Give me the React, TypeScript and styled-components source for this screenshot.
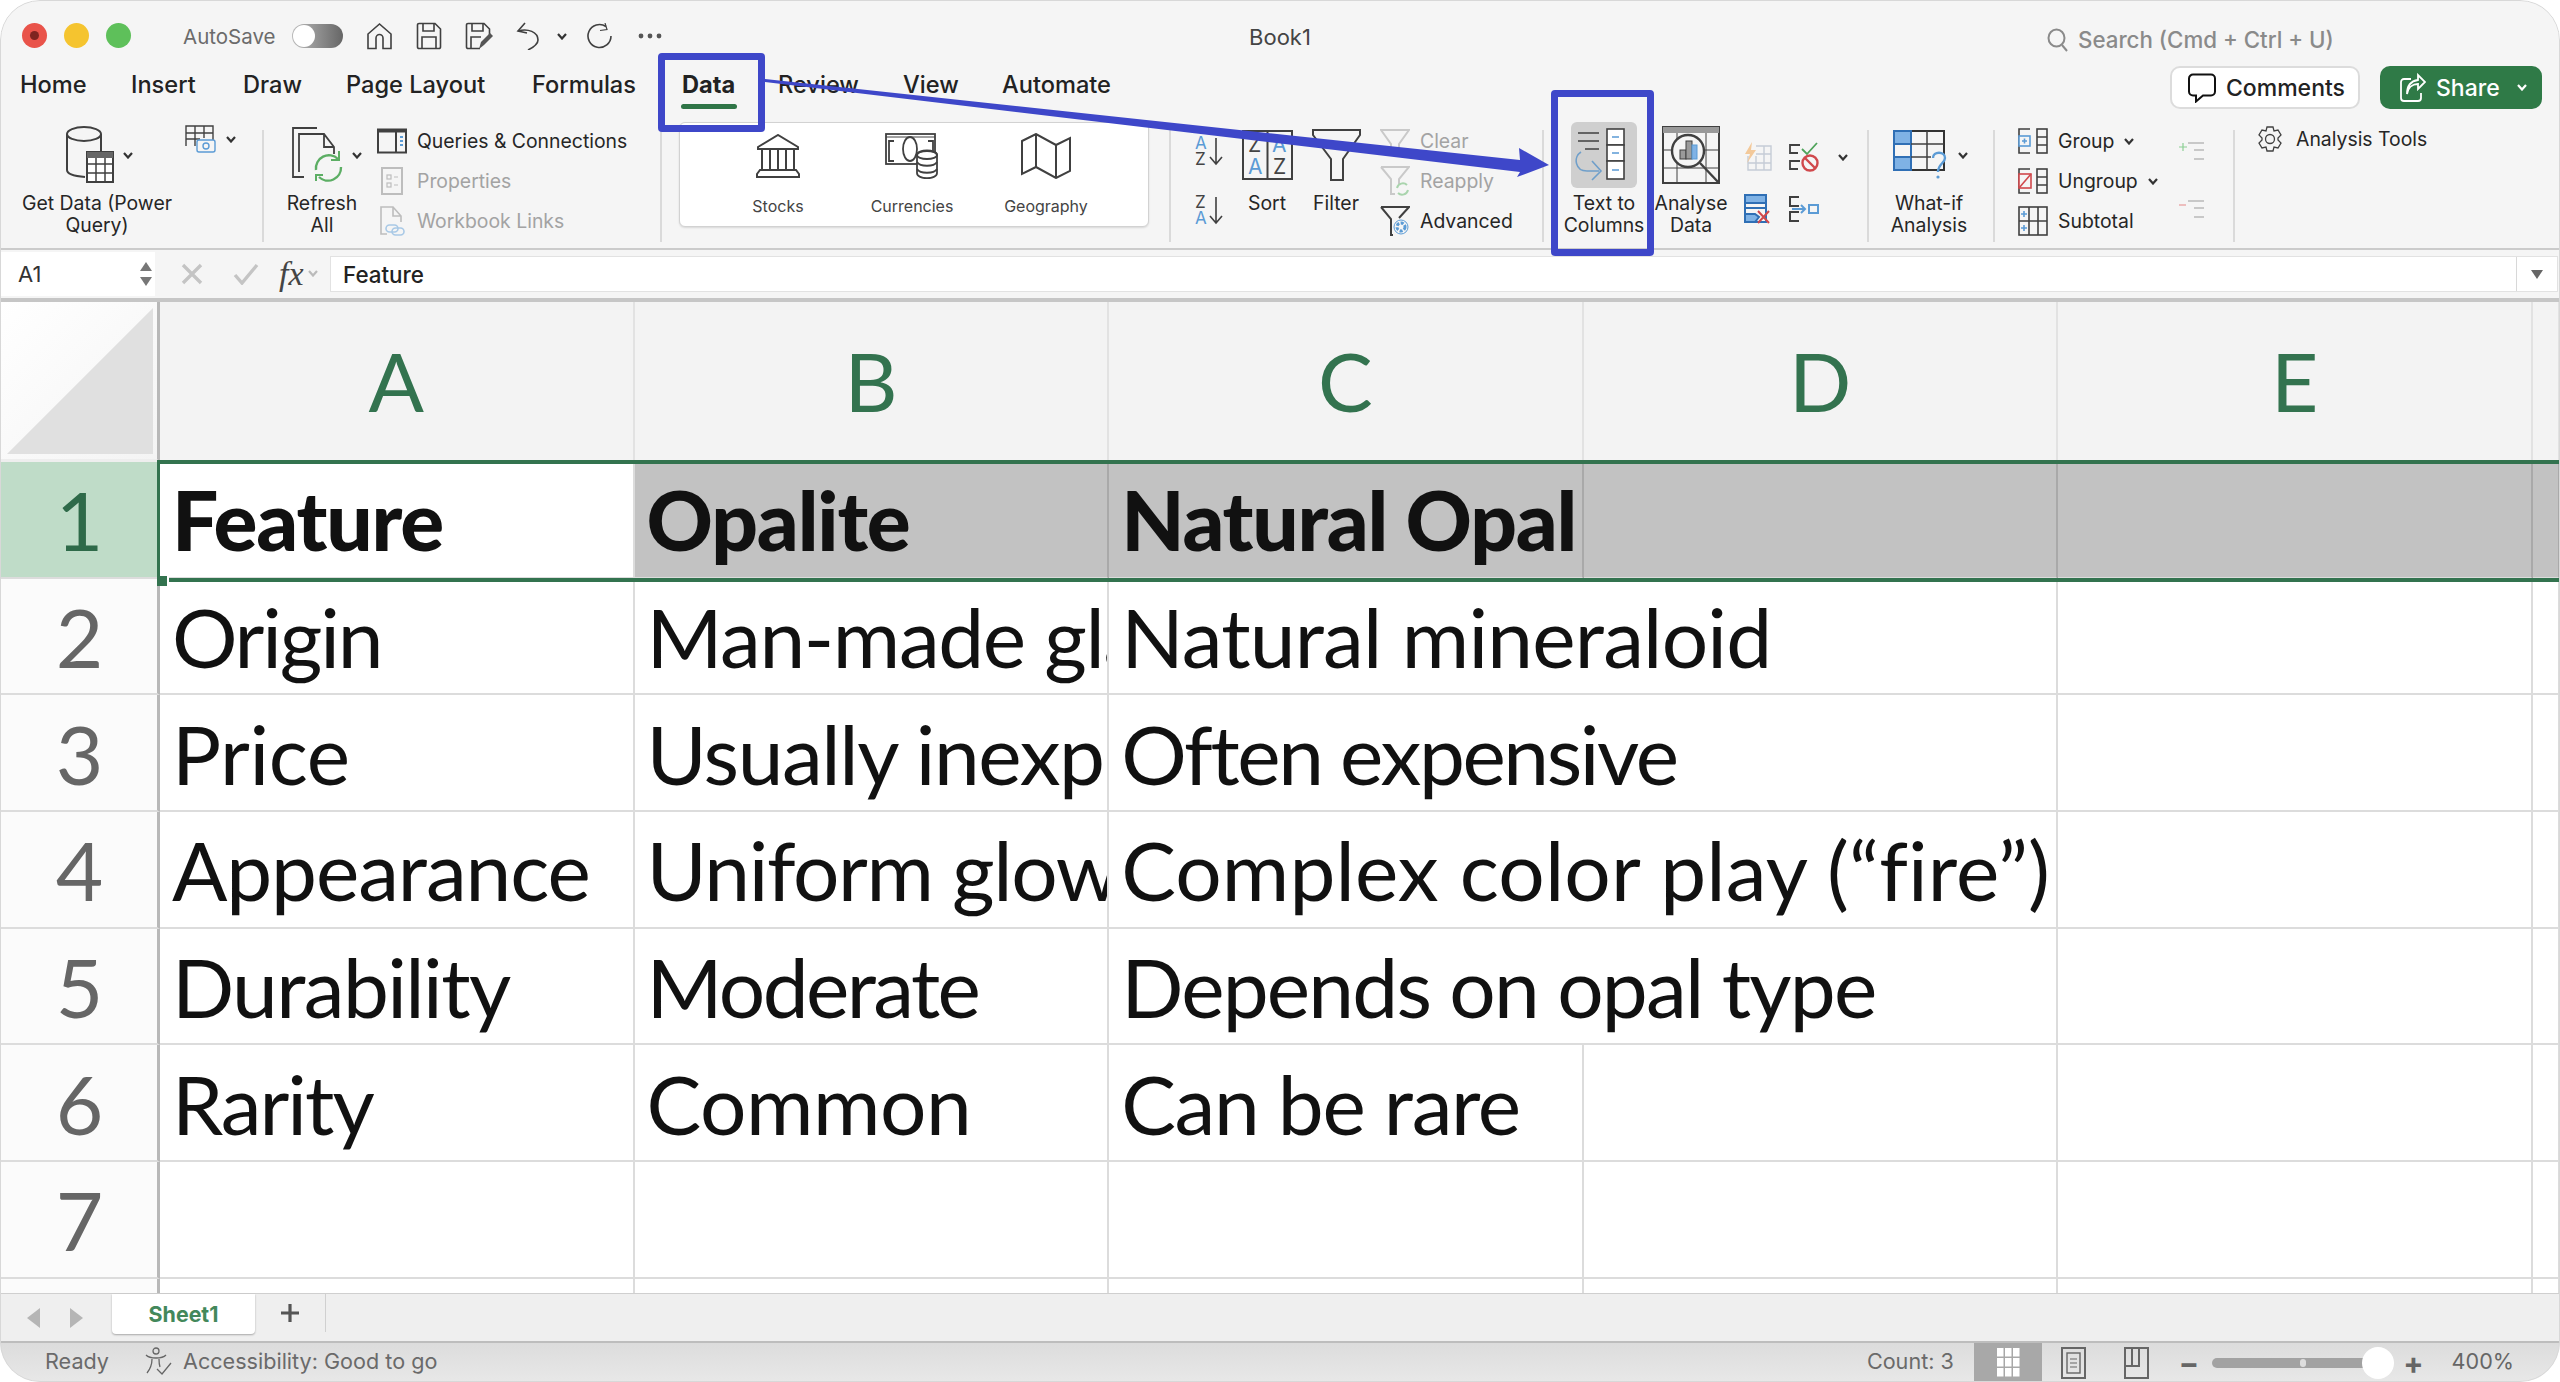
import React from 'react';
import styled, { createGlobalStyle } from 'styled-components';

const GlobalStyle = createGlobalStyle`
  html, body { margin: 0; padding: 0; background: #fff; }
  body { font-family: Inter, "Liberation Sans", sans-serif; overflow: hidden; }
`;

const Win = styled.div`
  position: relative;
  width: 2560px;
  height: 1382px;
  overflow: hidden;
  border-radius: 40px;
  background: #f5f5f5;
  display: flex;
  flex-direction: column;
  color: #222;
  &::after {
    content: '';
    position: absolute;
    inset: 0;
    border-radius: 40px;
    border: 1px solid #d8d8d8;
    pointer-events: none;
  }
`;

const Ico = styled.svg.attrs<React.SVGProps<SVGSVGElement>>(p => ({
  fill: p.fill ?? 'none',
  stroke: p.stroke ?? 'currentColor',
  strokeWidth: p.strokeWidth ?? 2,
}))`
  display: block;
  flex: none;
  color: #404040;
`;

/* title bar */
const TitleBar = styled.div`
  height: 66px;
  flex: none;
  display: flex;
  align-items: flex-start;
  padding: 6px 0 0 22px;
  box-sizing: border-box;
`;
const TrafficLights = styled.div`
  display: flex;
  gap: 17px;
  margin-top: 17px;
`;
const Light = styled.span<{ $c: string }>`
  width: 25px;
  height: 25px;
  border-radius: 50%;
  background: ${p => p.$c};
  display: flex;
  align-items: center;
  justify-content: center;
  &:first-child::after {
    content: '';
    width: 9px;
    height: 9px;
    border-radius: 50%;
    background: #7d2420;
  }
`;
const QuickBar = styled.div`
  display: flex;
  align-items: center;
  height: 60px;
  margin-left: 52px;
  font-size: 20.5px;
  color: #6b6b6b;
`;
const AutoSave = styled.span`
  width: 109px;
`;
const Toggle = styled.span`
  width: 51px;
  height: 24px;
  border-radius: 12px;
  background: linear-gradient(90deg, #bbb, #666);
  display: flex;
  margin-right: 23px;
  &::before {
    content: '';
    width: 22px;
    height: 22px;
    margin: 1px;
    border-radius: 50%;
    background: #fff;
  }
`;
const QuickBtn = styled.span<{ $gap?: number }>`
  display: flex;
  margin-right: ${p => p.$gap ?? 23}px;
`;
const WinTitle = styled.div`
  position: absolute;
  left: 1180px;
  width: 200px;
  top: 24px;
  text-align: center;
  font-size: 22px;
  color: #444;
`;
const SearchBox = styled.div`
  position: absolute;
  left: 2047px;
  top: 26px;
  display: flex;
  align-items: center;
  gap: 10px;
  font-size: 22.3px;
  font-weight: 500;
  color: #8a8a8a;
`;

/* tabs */
const TabRow = styled.div`
  height: 54px;
  flex: none;
  display: flex;
  align-items: flex-start;
  padding-left: 20px;
  box-sizing: border-box;
`;
const Tab = styled.span<{ $w: number; $active?: boolean }>`
  width: ${p => p.$w}px;
  height: 38px;
  line-height: 38px;
  font-size: 23.6px;
  font-weight: ${p => (p.$active ? 700 : 500)};
  color: #222;
  white-space: nowrap;
  position: relative;
  ${p =>
    p.$active &&
    `&::after {
      content: '';
      position: absolute;
      left: -1px;
      top: 38px;
      width: 56px;
      height: 5px;
      border-radius: 3px;
      background: #2f7547;
    }`}
`;
const TabRight = styled.div`
  margin-left: auto;
  display: flex;
  gap: 20px;
  padding-right: 18px;
`;
const CommentsBtn = styled.div`
  width: 190px;
  height: 43px;
  box-sizing: border-box;
  background: #fff;
  border: 2px solid #dcdcdc;
  border-radius: 10px;
  display: flex;
  align-items: center;
  padding-left: 15px;
  gap: 9px;
  font-size: 23px;
  font-weight: 500;
`;
const ShareBtn = styled.div`
  width: 162px;
  height: 43px;
  box-sizing: border-box;
  background: #2f7a47;
  border-radius: 10px;
  color: #fff;
  display: flex;
  align-items: center;
  padding-left: 19px;
  gap: 10px;
  font-size: 23px;
  font-weight: 500;
`;
const ShareChevron = styled.span`
  margin-left: 5px;
  display: flex;
`;

/* ribbon */
const Ribbon = styled.div`
  height: 130px;
  flex: none;
  box-sizing: border-box;
  border-bottom: 2px solid #cbcbcb;
  display: flex;
  align-items: flex-start;
`;
const Group = styled.div<{ $w: number; $pad: number }>`
  width: ${p => p.$w}px;
  height: 128px;
  flex: none;
  box-sizing: border-box;
  padding-left: ${p => p.$pad}px;
  display: flex;
  align-items: flex-start;
`;
const Sep = styled.div`
  width: 2px;
  height: 112px;
  margin-top: 10px;
  flex: none;
  background: #dadada;
`;
const Large = styled.div<{ $w: number; $ml?: number }>`
  width: ${p => p.$w}px;
  margin-left: ${p => p.$ml ?? 0}px;
  flex: none;
  display: flex;
  flex-direction: column;
  align-items: center;
`;
const LargeIcon = styled.div<{ $indent?: number; $lit?: boolean }>`
  height: 66px;
  margin: 2px 0 4px;
  align-self: ${p => (p.$lit ? 'center' : 'stretch')};
  width: ${p => (p.$lit ? '66px' : 'auto')};
  padding-left: ${p => p.$indent ?? 0}px;
  display: flex;
  align-items: center;
  gap: 8px;
  justify-content: ${p => (p.$indent === undefined ? 'center' : 'flex-start')};
  ${p => p.$lit && 'background: #cfcfcf; border-radius: 6px;'}
`;
const Label = styled.div`
  font-size: 19.4px;
  line-height: 22px;
  text-align: center;
  color: #262626;
  white-space: nowrap;
`;
const Stack = styled.div<{ $ml?: number; $w?: number }>`
  display: flex;
  flex-direction: column;
  margin-left: ${p => p.$ml ?? 0}px;
  ${p => p.$w && `width: ${p.$w}px;`}
  flex: none;
  padding-top: 1px;
`;
const RowTool = styled.div<{ $muted?: boolean }>`
  height: 40px;
  display: flex;
  align-items: center;
  font-size: 19.4px;
  white-space: nowrap;
  color: ${p => (p.$muted ? '#a3a3a3' : '#262626')};
`;
const RowIcon = styled.span`
  width: 30px;
  margin-right: 10px;
  display: flex;
  justify-content: center;
`;
const TextMenu = styled.span`
  margin-right: 10px;
`;
const Mini = styled.div<{ $ml: number; $mt: number }>`
  margin-left: ${p => p.$ml}px;
  margin-top: ${p => p.$mt}px;
  display: flex;
  align-items: center;
  gap: 10px;
  flex: none;
`;
const MiniGrid = styled.div`
  display: grid;
  grid-template-columns: 30px 30px 14px;
  column-gap: 17px;
  row-gap: 22px;
  margin: 22px 0 0 16px;
  align-items: center;
  justify-items: center;
`;
const OutlineCol = styled.div`
  margin: 21px 0 0 12px;
  display: flex;
  flex-direction: column;
  gap: 38px;
`;
const TypesPanel = styled.div`
  width: 470px;
  height: 105px;
  margin-top: 2px;
  box-sizing: border-box;
  background: #fff;
  border: 1px solid #d2d2d2;
  border-radius: 6px;
  box-shadow: 0 1px 2px rgba(0, 0, 0, 0.12);
  padding: 11px 0 0 31px;
  display: flex;
`;
const TypeCell = styled.div`
  width: 134px;
  display: flex;
  flex-direction: column;
  align-items: center;
  gap: 18px;
  font-size: 16px;
  line-height: 20px;
  color: #444;
`;
const TypeIcon = styled.div`
  height: 44px;
  display: flex;
  align-items: center;
`;
const SortCol = styled.div`
  width: 30px;
  display: flex;
  flex-direction: column;
  gap: 29px;
  margin-top: 16px;
  flex: none;
`;
const AnalysisTools = styled.div`
  display: flex;
  align-items: center;
  gap: 13px;
  margin-top: 6px;
  font-size: 19.4px;
  color: #262626;
`;

/* formula bar */
const FormulaBar = styled.div`
  height: 52px;
  flex: none;
  box-sizing: border-box;
  display: flex;
  align-items: flex-start;
  border-bottom: 4px solid #c6c6c6;
`;
const NameBox = styled.div`
  width: 155px;
  height: 44px;
  margin-top: 2px;
  box-sizing: border-box;
  background: #fff;
  padding: 0 3px 0 18px;
  display: flex;
  align-items: center;
  justify-content: space-between;
  font-size: 22px;
  color: #333;
`;
const Spinner = styled.div`
  display: flex;
  flex-direction: column;
  gap: 6px;
`;
const FxTools = styled.div`
  width: 175px;
  height: 47px;
  flex: none;
  box-sizing: border-box;
  display: flex;
  align-items: center;
  padding-left: 26px;
`;
const FxMark = styled.span`
  font-family: 'Liberation Serif', serif;
  font-style: italic;
  font-size: 34px;
  color: #444;
  margin: 0 4px 0 20px;
`;
const FormulaInput = styled.div`
  flex: 1;
  height: 36px;
  margin: 6px 2px 0 0;
  box-sizing: border-box;
  background: #fff;
  border: 1px solid #e2e2e2;
  display: flex;
  align-items: center;
  padding-left: 12px;
  font-size: 22.4px;
  font-weight: 500;
  color: #222;
`;
const FormulaDrop = styled.span`
  margin-left: auto;
  width: 40px;
  height: 100%;
  border-left: 1px solid #d8d8d8;
  display: flex;
  align-items: center;
  justify-content: center;
`;

/* sheet */
const SheetArea = styled.div`
  position: relative;
  height: 991px;
  flex: none;
  overflow: hidden;
  background: #fff;
`;
const Sheet = styled.div`
  display: grid;
  grid-template-columns: 160px repeat(5, 474.6px) 1fr;
  grid-template-rows: 160px;
  grid-auto-rows: 116.7px;
  font-family: Lato, 'Liberation Sans', sans-serif;
  font-size: 82px;
  font-variant-ligatures: none;
  color: #111;
`;
const Corner = styled.div`
  background: linear-gradient(135deg, #fff, #f4f4f4);
  border-right: 3px solid #b8b8b8;
  border-bottom: 3px solid #eee;
  box-sizing: border-box;
  display: flex;
  align-items: flex-end;
  justify-content: flex-end;
  padding: 0 4px 5px 0;
`;
const ColHead = styled.div`
  background: #f3f3f3;
  border-right: 2px solid #e2e2e2;
  box-sizing: border-box;
  display: flex;
  align-items: center;
  justify-content: center;
  color: #33734f;
  padding-bottom: 5px;
`;
const RowHead = styled.div<{ $on?: boolean }>`
  background: ${p => (p.$on ? '#bfdcc8' : '#fbfbfb')};
  color: ${p => (p.$on ? '#2e6a49' : '#666')};
  border-right: 3px solid #b8b8b8;
  border-bottom: 2px solid #dcdcdc;
  box-sizing: border-box;
  display: flex;
  align-items: center;
  justify-content: center;
  padding-left: 2px;
`;
const Cell = styled.div<{ $span?: number; $gray?: boolean; $bold?: boolean; $track?: number }>`
  grid-column: span ${p => p.$span ?? 1};
  box-sizing: border-box;
  border-right: 2px solid ${p => (p.$gray ? '#a9a9a9' : '#dcdcdc')};
  border-bottom: 2px solid #dcdcdc;
  background: ${p => (p.$gray ? '#c2c2c2' : '#fff')};
  padding-left: 12px;
  display: flex;
  align-items: center;
  white-space: nowrap;
  overflow: hidden;
  letter-spacing: ${p => p.$track ?? -1.2}px;
  font-weight: ${p => (p.$bold ? 900 : 400)};
`;
const Selection = styled.div`
  position: absolute;
  left: 157px;
  top: 158px;
  right: 0;
  height: 122px;
  box-sizing: border-box;
  border: solid #33734f;
  border-width: 4px 0 4px 3px;
  pointer-events: none;
  &::after {
    content: '';
    position: absolute;
    left: -3px;
    bottom: -8px;
    width: 10px;
    height: 10px;
    background: #33734f;
    border-right: 2px solid #fff;
  }
`;

/* bottom */
const TabsBar = styled.div`
  height: 48px;
  flex: none;
  box-sizing: border-box;
  background: #efefef;
  border-top: 1px solid #cfcfcf;
  display: flex;
  align-items: flex-start;
  padding-left: 27px;
`;
const NavArrow = styled.span<{ $gap: number }>`
  margin: 14px ${p => p.$gap}px 0 0;
  display: flex;
`;
const SheetTab = styled.div`
  width: 143px;
  height: 40px;
  background: #fff;
  border-radius: 0 0 4px 4px;
  box-shadow: 0 1px 2px rgba(0, 0, 0, 0.3);
  display: flex;
  align-items: center;
  justify-content: center;
  font-size: 21.4px;
  font-weight: 700;
  color: #43885b;
`;
const AddSheet = styled.div`
  width: 70px;
  height: 38px;
  border-right: 1px solid #d0d0d0;
  display: flex;
  align-items: center;
  justify-content: center;
  color: #555;
`;
const StatusBar = styled.div`
  height: 41px;
  flex: none;
  box-sizing: border-box;
  border-top: 2px solid #bdbdbd;
  background: linear-gradient(180deg, #dcdcdc, #e8e8e8);
  display: flex;
  align-items: center;
  padding-left: 45px;
  font-size: 21.6px;
  color: #6a6a6a;
`;
const Ready = styled.span`
  width: 99px;
  margin-bottom: 4px;
`;
const Access = styled.span`
  display: flex;
  align-items: center;
  gap: 10px;
  margin-bottom: 4px;
`;
const StatusRight = styled.div`
  margin-left: auto;
  display: flex;
  align-items: center;
  height: 100%;
  padding-right: 46px;
`;
const Count = styled.span`
  margin: 0 20px 4px 0;
`;
const ViewBtn = styled.span<{ $on?: boolean; $w: number }>`
  width: ${p => p.$w}px;
  height: 100%;
  display: flex;
  align-items: center;
  justify-content: center;
  ${p => p.$on && 'background: #a8a8a8;'}
`;
const ZoomTrack = styled.span`
  width: 166px;
  height: 10px;
  margin: 0 25px 0 13px;
  background: #a2a2a2;
  border-radius: 5px;
  position: relative;
  &::before {
    content: '';
    position: absolute;
    left: 88px;
    top: 1px;
    width: 6px;
    height: 8px;
    border-radius: 3px;
    background: #ddd;
  }
  &::after {
    content: '';
    position: absolute;
    right: -16px;
    top: -11px;
    width: 32px;
    height: 32px;
    border-radius: 50%;
    background: #fff;
  }
`;
const ZoomPct = styled.span`
  margin: 0 0 4px 28px;
  color: #666;
`;
const ZoomSign = styled.span<{ $ml?: number }>`
  margin-left: ${p => p.$ml ?? 0}px;
  font-size: 30px;
  font-weight: 700;
  line-height: 30px;
  color: #666;
`;

/* annotations */
const Callout = styled.div<{ $x: number; $y: number; $w: number; $h: number }>`
  position: absolute;
  left: ${p => p.$x}px;
  top: ${p => p.$y}px;
  width: ${p => p.$w}px;
  height: ${p => p.$h}px;
  box-sizing: border-box;
  border: 7px solid #3e47c9;
  border-radius: 4px;
  pointer-events: none;
`;
const ArrowOverlay = styled.svg`
  position: absolute;
  left: 760px;
  top: 70px;
  pointer-events: none;
`;

const blue = '#5b9bd5';
const paleBlue = '#7fb2e5';

const Chevron = ({ w = 10, c = '#333' }: { w?: number; c?: string }) => (
  <Ico width={w} height={7} viewBox="0 0 10 7" style={{ color: c }} strokeWidth={2.2}>
    <path d="M1 1l4 4.5L9 1" />
  </Ico>
);

const HomeIcon = () => (
  <Ico width={27} height={28} viewBox="0 0 27 28" strokeWidth={1.6}>
    <path d="M2 12L13.5 2 25 12v14.5h-8V16a3.5 3.5 0 0 0-7 0v10.5H2z" />
  </Ico>
);
const SaveIcon = () => (
  <Ico width={26} height={28} viewBox="0 0 26 28" strokeWidth={1.6}>
    <path d="M3 1.5h16L24.5 7v18a1.5 1.5 0 0 1-1.5 1.5H3A1.5 1.5 0 0 1 1.5 25V3A1.5 1.5 0 0 1 3 1.5z" />
    <path d="M7 1.5V9h11V1.5M6 26.5V15h14v11.5" />
  </Ico>
);
const SaveAsIcon = () => (
  <Ico width={28} height={28} viewBox="0 0 28 28" strokeWidth={1.6}>
    <path d="M15 26.5H3A1.5 1.5 0 0 1 1.5 25V3A1.5 1.5 0 0 1 3 1.5h16L24.5 7v7" />
    <path d="M7 1.5V9h11V1.5M6 26V15h10" />
    <path d="M14 27l2-7 9-9 3 3-9 9z" fill="#555" stroke="none" />
  </Ico>
);
const UndoIcon = () => (
  <Ico width={24} height={28} viewBox="0 0 24 28" strokeWidth={1.6}>
    <path d="M9 1L2 9l9 2" />
    <path d="M2 9c10-3 20 1 20 9 0 5-6 8-10 10" />
  </Ico>
);
const RedoIcon = () => (
  <Ico width={26} height={26} viewBox="0 0 26 26" strokeWidth={1.6}>
    <path d="M19 3.5A11.5 11.5 0 1 0 24 13" />
    <path d="M18 0l2 6.5-7 1" strokeWidth={1.2} />
  </Ico>
);
const DotsIcon = () => (
  <Ico width={24} height={6} viewBox="0 0 24 6" stroke="none" style={{ fill: '#555' }}>
    <circle cx="3" cy="3" r="2.4" />
    <circle cx="12" cy="3" r="2.4" />
    <circle cx="21" cy="3" r="2.4" />
  </Ico>
);
const SearchIcon = () => (
  <Ico width={21} height={24} viewBox="0 0 21 24" style={{ color: '#8a8a8a' }}>
    <ellipse cx="9.5" cy="10" rx="8" ry="8.5" />
    <path d="M15 17l5 6" />
  </Ico>
);
const CommentIcon = () => (
  <Ico width={30} height={30} viewBox="0 0 30 30" style={{ color: '#111' }}>
    <path d="M6 1.5h18a4 4 0 0 1 4 4v13a4 4 0 0 1-4 4h-8l-7 6v-6H6a4 4 0 0 1-4-4v-13a4 4 0 0 1 4-4z" />
  </Ico>
);
const ShareIcon = () => (
  <Ico width={27} height={30} viewBox="0 0 27 30" style={{ color: '#fff' }} strokeWidth={1.8}>
    <path d="M12 6H5a3 3 0 0 0-3 3v16a3 3 0 0 0 3 3h14a3 3 0 0 0 3-3v-5" />
    <path d="M8 21c1-7 6-10 11-10V16l7-7-7-7v5C12 8 8 12 8 21z" />
  </Ico>
);

const GetDataIcon = () => (
  <Ico width={50} height={58} viewBox="0 0 50 58">
    <ellipse cx="19" cy="8" rx="17" ry="7" />
    <path d="M2 8v36c0 4 6 6 18 7M36 8v18" />
    <rect x="22" y="26" width="26" height="30" fill="#fff" />
    <rect x="22" y="26" width="26" height="6" fill="#666" stroke="none" />
    <path d="M22 38h26M22 47h26M31 32v24M40 32v24" strokeWidth={1.5} />
  </Ico>
);
const PhotoTableIcon = () => (
  <Ico width={31} height={28} viewBox="0 0 31 28" strokeWidth={1.4}>
    <path d="M1 21V1h27v14M1 8h27M1 14h14M10 1v20M19 1v12" />
    <rect x="12" y="15" width="18" height="12" rx="2" fill="#f5f5f5" stroke={blue} />
    <circle cx="21" cy="21" r="3" stroke={blue} />
  </Ico>
);
const RefreshIcon = () => (
  <Ico width={52} height={56} viewBox="0 0 52 56" strokeWidth={1.8}>
    <path d="M12 50H1V1h24" />
    <path d="M7 45V7h25l10 13v7M32 7v13h10" />
    <g stroke="#5cae64" strokeWidth={2.4}>
      <path d="M24 43a13 13 0 0 1 22-11" />
      <path d="M49 40a13 13 0 0 1-22 10" />
      <path d="M47 24v9h-8M24 54v-6h7" strokeWidth={2} />
    </g>
  </Ico>
);
const QueriesIcon = () => (
  <Ico width={30} height={26} viewBox="0 0 30 26">
    <rect x="1" y="1.5" width="28" height="23" />
    <path d="M1 3h28" strokeWidth={3} />
    <path d="M19 3v21" />
    <path d="M23 9h3M23 13h3M23 17h3" stroke={blue} />
  </Ico>
);
const PropsIcon = () => (
  <Ico width={22} height={28} viewBox="0 0 22 28" style={{ color: '#bdbdbd' }}>
    <rect x="1" y="1" width="20" height="26" />
    <rect x="6" y="8" width="4" height="4" strokeWidth={1.2} />
    <rect x="6" y="16" width="4" height="4" strokeWidth={1.2} />
    <path d="M13 10h4M13 18h4" strokeWidth={1.2} />
  </Ico>
);
const LinksIcon = () => (
  <Ico width={26} height={30} viewBox="0 0 26 30" style={{ color: '#bdbdbd' }} strokeWidth={1.6}>
    <path d="M8 28H2V1h12l8 9v6M14 1v9h8" />
    <g stroke="#a9c9e6">
      <rect x="7" y="19" width="12" height="7" rx="3.5" />
      <rect x="13" y="22" width="12" height="7" rx="3.5" />
    </g>
  </Ico>
);
const StocksIcon = () => (
  <Ico width={46} height={44} viewBox="0 0 46 44">
    <path d="M3 13L23 1l20 12v2H3z" />
    <path d="M7 15v21M39 15v21M15 15v21M23 15v21M31 15v21M5 36h36l3 4v3H2v-3z" />
  </Ico>
);
const CurrenciesIcon = () => (
  <Ico width={54} height={46} viewBox="0 0 54 46" strokeWidth={1.8}>
    <rect x="1" y="1" width="49" height="30" />
    <path d="M1 4h49" strokeWidth={1} />
    <path d="M9 8H4v20h5M43 8h5v12" />
    <ellipse cx="25" cy="16" rx="7" ry="12" />
    <path d="M32 22c0-6 20-6 20 0v18c0 7-20 7-20 0z" fill="#fff" />
    <ellipse cx="42" cy="22" rx="10" ry="4" />
    <path d="M32 29c3 5 17 5 20 0M32 36c3 5 17 5 20 0" />
  </Ico>
);
const MapIcon = () => (
  <Ico width={52} height={46} viewBox="0 0 52 46">
    <path d="M2 8L16 1l20 11 14-7v33l-14 7-20-11-14 7z" />
    <path d="M16 1v34M36 12v33" />
  </Ico>
);
const SmallText = styled.text`
  font-family: Inter, 'Liberation Sans', sans-serif;
  font-size: 17px;
  stroke: none;
`;
const SortAZ = ({ flip }: { flip?: boolean }) => (
  <Ico width={30} height={30} viewBox="0 0 30 30">
    <SmallText x="0" y="13" fill={flip ? '#444' : blue}>{flip ? 'Z' : 'A'}</SmallText>
    <SmallText x="0" y="29" fill={flip ? blue : '#444'}>{flip ? 'A' : 'Z'}</SmallText>
    <path d="M21 2v26M15 21l6 7 6-7" strokeWidth={1.6} />
  </Ico>
);
const SortIcon = () => (
  <Ico width={51} height={50} viewBox="0 0 51 50">
    <rect x="1" y="1" width="49" height="48" />
    <path d="M25.5 1v48" />
    <SmallText x="6" y="22" fill="#444" style={{ fontSize: 21 }}>Z</SmallText>
    <SmallText x="6" y="44" fill={blue} style={{ fontSize: 21 }}>A</SmallText>
    <SmallText x="30" y="22" fill={blue} style={{ fontSize: 21 }}>A</SmallText>
    <SmallText x="31" y="44" fill="#444" style={{ fontSize: 21 }}>Z</SmallText>
  </Ico>
);
const FilterIcon = () => (
  <Ico width={49} height={52} viewBox="0 0 49 52">
    <path d="M1 1h47v5L31 30v21H19V30L1 6z" />
  </Ico>
);
const ClearIcon = () => (
  <Ico width={30} height={24} viewBox="0 0 30 24" style={{ color: '#c9c9c9' }}>
    <path d="M1 1h28l-10 14v8h-8v-8z" />
  </Ico>
);
const ReapplyIcon = () => (
  <Ico width={30} height={30} viewBox="0 0 30 30" style={{ color: '#c9c9c9' }}>
    <path d="M1 1h28l-10 12v5M1 1l10 12v15h4" />
    <path d="M17 22a6 6 0 0 1 10-3M28 24a6 6 0 0 1-10 3" stroke="#a9d4ad" />
  </Ico>
);
const AdvancedIcon = () => (
  <Ico width={30} height={30} viewBox="0 0 30 30">
    <path d="M1 1h28l-10 11M1 1l10 12v16h2" />
    <circle cx="21" cy="21" r="4" stroke={blue} strokeWidth={3} strokeDasharray="3 1.5" />
    <circle cx="21" cy="21" r="7" stroke={blue} strokeWidth={1} />
  </Ico>
);
const TextColsIcon = () => (
  <Ico width={58} height={54} viewBox="0 0 58 54" strokeWidth={1.6}>
    <path d="M3 5h21M3 13h21M10 21h14" />
    <rect x="32" y="1" width="17" height="16" fill="#fff" />
    <rect x="32" y="17" width="17" height="16" fill="#fff" />
    <rect x="32" y="33" width="17" height="18" fill="#fff" />
    <path d="M37 9h7M37 25h7M37 42h7" stroke={blue} />
    <path d="M6 24c-8 5-6 19 6 19h12M17 33l9 10-9 9" stroke="#6f9fca" />
  </Ico>
);
const AnalyseIcon = () => (
  <Ico width={58} height={58} viewBox="0 0 58 58">
    <rect x="1" y="1" width="56" height="56" />
    <rect x="1" y="1" width="56" height="6" fill="#999" stroke="none" />
    <path d="M1 24h56M1 42h56M15 7v50M44 7v50" strokeWidth={1} />
    <circle cx="26" cy="25" r="16" fill="#f5f5f5" strokeWidth={2.4} />
    <rect x="18" y="24" width="6" height="9" fill="#9a9a9a" strokeWidth={1} />
    <rect x="24" y="15" width="6" height="18" fill="#9a9a9a" strokeWidth={1} />
    <rect x="30" y="19" width="5" height="14" fill={paleBlue} stroke={blue} strokeWidth={1} />
    <path d="M38 37l19 20" strokeWidth={2.4} />
  </Ico>
);
const FlashFillIcon = () => (
  <Ico width={30} height={30} viewBox="0 0 30 30" style={{ color: '#c5ccd6' }} strokeWidth={1.4}>
    <path d="M6 14V28h23V4H14M6 21h23M14 14v14M22 4v24M14 12h15" />
    <path d="M10 0L3 12h5l-3 9 9-13H9z" fill="#f3c99a" stroke="none" />
  </Ico>
);
const ValidationIcon = () => (
  <Ico width={30} height={30} viewBox="0 0 30 30" strokeWidth={1.8}>
    <path d="M11 3H1v8h8M11 19H1v8h8" />
    <path d="M13 7l5 5 10-11" stroke="#4ea35a" />
    <circle cx="21" cy="21" r="7.5" stroke="#d0484c" strokeWidth={2.4} />
    <path d="M16 16l10 10" stroke="#d0484c" strokeWidth={2.4} />
  </Ico>
);
const RemoveDupIcon = () => (
  <Ico width={26} height={30} viewBox="0 0 26 30" stroke="#2f6fb5">
    <rect x="1" y="1" width="21" height="27" />
    <rect x="1" y="1" width="21" height="8" fill={paleBlue} />
    <path d="M1 14h21" />
    <path d="M1 20h10l4 3-4 5H1z" fill={paleBlue} />
    <path d="M14 17l11 12M25 17L14 29" stroke="#d0484c" />
  </Ico>
);
const ConsolidateIcon = () => (
  <Ico width={30} height={26} viewBox="0 0 30 26">
    <path d="M10 1H1v9h9M10 16H1v9h9" />
    <path d="M3 13h13M12 9l4 4-4 4" stroke={blue} />
    <rect x="20" y="9" width="9" height="8" stroke={blue} />
  </Ico>
);
const WhatIfIcon = () => (
  <Ico width={57} height={50} viewBox="0 0 57 50">
    <rect x="1" y="1" width="50" height="39" stroke="#333" />
    <rect x="1" y="1" width="17" height="13" fill={paleBlue} stroke="#2f6fb5" />
    <rect x="1" y="27" width="17" height="13" fill={paleBlue} stroke="#2f6fb5" />
    <rect x="1" y="14" width="17" height="13" stroke="#2f6fb5" />
    <path d="M18 14h33M18 27h20M34 1v39" strokeWidth={1.5} />
    <path d="M40 28c0-7 12-7 12 0 0 5-7 6-7 14" fill="#f5f5f5" stroke={blue} strokeWidth={2.4} />
    <circle cx="45" cy="47" r="1.6" fill={blue} stroke="none" />
  </Ico>
);
const GroupIcon = ({ variant }: { variant: 'plus' | 'x' }) => (
  <Ico width={30} height={26} viewBox="0 0 30 26" strokeWidth={1.6}>
    <path d="M12 1H1v24h11" />
    <rect x="19" y="1" width="10" height="24" />
    <path d="M19 9h10M19 17h10" />
    {variant === 'plus' ? (
      <>
        <rect x="1" y="8" width="11" height="10" fill="#f5f5f5" stroke={blue} />
        <path d="M4 13h5M6.5 10.5v5" stroke={blue} />
      </>
    ) : (
      <>
        <rect x="1" y="6" width="12" height="14" fill="#f5f5f5" stroke="#d0484c" />
        <path d="M1 20L13 6" stroke="#d0484c" />
      </>
    )}
  </Ico>
);
const SubtotalIcon = () => (
  <Ico width={30} height={30} viewBox="0 0 30 30" strokeWidth={1.6}>
    <rect x="1" y="1" width="28" height="28" />
    <path d="M11 1v28M20 1v28M1 15h28" />
    <path d="M3 8h6M6 5v6M3 22h6M6 19v6" stroke={blue} />
  </Ico>
);
const OutlineIcon = ({ c, plus }: { c: string; plus?: boolean }) => (
  <Ico width={28} height={20} viewBox="0 0 28 20" style={{ color: '#c8c8c8' }} strokeWidth={1.8}>
    <path d="M11 2h16M17 9h10M17 18h10" />
    {plus ? <path d="M2 6h8M6 2v8" stroke={c} strokeWidth={1.2} /> : <path d="M2 6h7" stroke={c} strokeWidth={1.2} />}
  </Ico>
);
const GearIcon = () => (
  <Ico width={26} height={26} viewBox="0 0 26 26" strokeWidth={1.3}>
    <path d="M10 1h6l1 4 4-1 3 5-3 3v2l3 3-3 5-4-1-1 4h-6l-1-4-4 1-3-5 3-3v-2L2 9l3-5 4 1z" />
    <circle cx="13" cy="13" r="4.5" />
  </Ico>
);
const Tri = ({ dir, c }: { dir: 'up' | 'down' | 'left' | 'right'; c: string }) => {
  const pts = { up: '0,9 6,0 12,9', down: '0,0 12,0 6,9', left: '13,0 13,20 0,10', right: '0,0 13,10 0,20' }[dir];
  const horizontal = dir === 'left' || dir === 'right';
  return (
    <Ico
      width={horizontal ? 13 : 12}
      height={horizontal ? 20 : 9}
      viewBox={horizontal ? '0 0 13 20' : '0 0 12 9'}
      stroke="none"
      style={{ fill: c }}
    >
      <polygon points={pts} />
    </Ico>
  );
};
const AccessIcon = () => (
  <Ico width={29} height={28} viewBox="0 0 29 28" style={{ color: '#666' }} strokeWidth={1.3}>
    <circle cx="12" cy="4" r="3" />
    <path d="M2 8c3 3 6 3 10 3s7 0 10-3M8 12c0 5-1 9-5 14M15 12c0 3 0 5 1 8" />
    <path d="M13 22l5 5 9-11" />
  </Ico>
);
const GridViewIcon = () => (
  <Ico width={24} height={32} viewBox="0 0 24 32" stroke="none">
    {[1, 9, 17].flatMap(x =>
      [1, 11, 21].map(y => <rect key={`${x}-${y}`} x={x} y={y} width="6.5" height="8.5" fill="#fff" />)
    )}
  </Ico>
);
const PageViewIcon = () => (
  <Ico width={25} height={32} viewBox="0 0 25 32" style={{ color: '#666' }}>
    <rect x="1" y="1" width="23" height="30" />
    <rect x="6" y="6" width="13" height="20" strokeWidth={1.4} />
    <path d="M9 12h7M9 16h7M9 20h7" strokeWidth={1.2} />
  </Ico>
);
const BreakViewIcon = () => (
  <Ico width={25} height={32} viewBox="0 0 25 32" style={{ color: '#666' }}>
    <rect x="1" y="1" width="23" height="30" />
    <path d="M1 19h14V1M8 1v18" />
  </Ico>
);

const tabs: [string, number][] = [
  ['Home', 111], ['Insert', 112], ['Draw', 103], ['Page Layout', 186], ['Formulas', 150],
  ['Data', 96], ['Review', 125], ['View', 99], ['Automate', 110],
];

// text, letter-spacing: Lato stands in for Calibri, so each string is tracked to its width
type Entry = [string, number];
const rows: Entry[][] = [
  [['Origin', -2.2], ['Man-made glass', -1.4], ['Natural mineraloid', -0.8]],
  [['Price', -0.4], ['Usually inexpensive', -1.4], ['Often expensive', -2.4]],
  [['Appearance', -1.1], ['Uniform glow effect', -1.4], ['Complex color play (“fire”)', 0.1]],
  [['Durability', -1.6], ['Moderate', -2.6], ['Depends on opal type', -1.8]],
  [['Rarity', -2], ['Common', -0.5], ['Can be rare', -1.4]],
  [['', 0], ['', 0], ['', 0]],
  [['', 0], ['', 0], ['', 0]],
];

export default function App() {
  return (
    <Win>
      <GlobalStyle />
      <TitleBar>
        <TrafficLights>
          <Light $c="#e9534a" />
          <Light $c="#f5c42f" />
          <Light $c="#5ec05a" />
        </TrafficLights>
        <QuickBar>
          <AutoSave>AutoSave</AutoSave>
          <Toggle />
          <QuickBtn><HomeIcon /></QuickBtn>
          <QuickBtn><SaveIcon /></QuickBtn>
          <QuickBtn><SaveAsIcon /></QuickBtn>
          <QuickBtn $gap={17}><UndoIcon /></QuickBtn>
          <QuickBtn $gap={20}><Chevron /></QuickBtn>
          <QuickBtn $gap={25}><RedoIcon /></QuickBtn>
          <QuickBtn><DotsIcon /></QuickBtn>
        </QuickBar>
        <WinTitle>Book1</WinTitle>
        <SearchBox><SearchIcon />Search (Cmd + Ctrl + U)</SearchBox>
      </TitleBar>

      <TabRow>
        {tabs.map(([name, w]) => (
          <Tab key={name} $w={w} $active={name === 'Data'}>{name}</Tab>
        ))}
        <TabRight>
          <CommentsBtn><CommentIcon />Comments</CommentsBtn>
          <ShareBtn><ShareIcon />Share<ShareChevron><Chevron w={14} c="#fff" /></ShareChevron></ShareBtn>
        </TabRight>
      </TabRow>

      <Ribbon>
        <Group $w={262} $pad={22}>
          <Large $w={150}>
            <LargeIcon $indent={43}><GetDataIcon /><Chevron /></LargeIcon>
            <Label>Get Data (Power<br />Query)</Label>
          </Large>
          <Mini $ml={13} $mt={5}><PhotoTableIcon /><Chevron /></Mini>
        </Group>
        <Sep />
        <Group $w={396} $pad={8}>
          <Large $w={100}>
            <LargeIcon $indent={20}><RefreshIcon /><Chevron /></LargeIcon>
            <Label>Refresh<br />All</Label>
          </Large>
          <Stack $ml={5}>
            <RowTool><RowIcon><QueriesIcon /></RowIcon>Queries &amp; Connections</RowTool>
            <RowTool $muted><RowIcon><PropsIcon /></RowIcon>Properties</RowTool>
            <RowTool $muted><RowIcon><LinksIcon /></RowIcon>Workbook Links</RowTool>
          </Stack>
        </Group>
        <Sep />
        <Group $w={507} $pad={17}>
          <TypesPanel>
            <TypeCell><TypeIcon><StocksIcon /></TypeIcon>Stocks</TypeCell>
            <TypeCell><TypeIcon><CurrenciesIcon /></TypeIcon>Currencies</TypeCell>
            <TypeCell><TypeIcon><MapIcon /></TypeIcon>Geography</TypeCell>
          </TypesPanel>
        </Group>
        <Sep />
        <Group $w={371} $pad={24}>
          <SortCol><SortAZ /><SortAZ flip /></SortCol>
          <Large $w={62} $ml={11}>
            <LargeIcon><SortIcon /></LargeIcon>
            <Label>Sort</Label>
          </Large>
          <Large $w={62} $ml={7}>
            <LargeIcon><FilterIcon /></LargeIcon>
            <Label>Filter</Label>
          </Large>
          <Stack $ml={13}>
            <RowTool $muted><RowIcon><ClearIcon /></RowIcon>Clear</RowTool>
            <RowTool $muted><RowIcon><ReapplyIcon /></RowIcon>Reapply</RowTool>
            <RowTool><RowIcon><AdvancedIcon /></RowIcon>Advanced</RowTool>
          </Stack>
        </Group>
        <Sep />
        <Group $w={323} $pad={22}>
          <Large $w={76}>
            <LargeIcon $lit><TextColsIcon /></LargeIcon>
            <Label>Text to<br />Columns</Label>
          </Large>
          <Large $w={70} $ml={14}>
            <LargeIcon><AnalyseIcon /></LargeIcon>
            <Label>Analyse<br />Data</Label>
          </Large>
          <MiniGrid>
            <FlashFillIcon /><ValidationIcon /><Chevron />
            <RemoveDupIcon /><ConsolidateIcon />
          </MiniGrid>
        </Group>
        <Sep />
        <Group $w={124} $pad={10}>
          <Large $w={100}>
            <LargeIcon $indent={14}><WhatIfIcon /><Chevron /></LargeIcon>
            <Label>What-if<br />Analysis</Label>
          </Large>
        </Group>
        <Sep />
        <Group $w={238} $pad={23}>
          <Stack $w={147}>
            <RowTool><RowIcon><GroupIcon variant="plus" /></RowIcon><TextMenu>Group</TextMenu><Chevron /></RowTool>
            <RowTool><RowIcon><GroupIcon variant="x" /></RowIcon><TextMenu>Ungroup</TextMenu><Chevron /></RowTool>
            <RowTool><RowIcon><SubtotalIcon /></RowIcon>Subtotal</RowTool>
          </Stack>
          <OutlineCol>
            <OutlineIcon c="#8ccf94" plus />
            <OutlineIcon c="#e89a9a" />
          </OutlineCol>
        </Group>
        <Sep />
        <Group $w={300} $pad={22}>
          <AnalysisTools><GearIcon />Analysis Tools</AnalysisTools>
        </Group>
      </Ribbon>

      <FormulaBar>
        <NameBox>
          A1
          <Spinner><Tri dir="up" c="#777" /><Tri dir="down" c="#777" /></Spinner>
        </NameBox>
        <FxTools>
          <Ico width={22} height={22} viewBox="0 0 22 22" style={{ color: '#c4c4c4' }} strokeWidth={3.4}>
            <path d="M2 2l18 18M20 2L2 20" />
          </Ico>
          <Ico width={26} height={22} viewBox="0 0 26 22" style={{ color: '#c4c4c4', marginLeft: 30 }} strokeWidth={3.4}>
            <path d="M2 12l7 8L24 2" />
          </Ico>
          <FxMark>fx</FxMark>
          <Chevron c="#bbb" />
        </FxTools>
        <FormulaInput>
          Feature
          <FormulaDrop><Tri dir="down" c="#666" /></FormulaDrop>
        </FormulaInput>
      </FormulaBar>

      <SheetArea>
        <Sheet>
          <Corner>
            <Ico width={146} height={146} viewBox="0 0 146 146" stroke="none" style={{ fill: '#e0e0e0' }}>
              <polygon points="0,146 146,146 146,0" />
            </Ico>
          </Corner>
          {['A', 'B', 'C', 'D', 'E', ''].map((c, i) => (
            <ColHead key={i}>{c}</ColHead>
          ))}
          <RowHead $on>1</RowHead>
          <Cell $bold>Feature</Cell>
          <Cell $bold $gray>Opalite</Cell>
          <Cell $bold $gray>Natural Opal</Cell>
          <Cell $gray />
          <Cell $gray />
          <Cell $gray />
          {rows.map((r, i) => (
            <React.Fragment key={i}>
              <RowHead>{i + 2}</RowHead>
              <Cell $track={r[0][1]}>{r[0][0]}</Cell>
              <Cell $track={r[1][1]}>{r[1][0]}</Cell>
              {i < 4 ? (
                <Cell $span={2} $track={r[2][1]}>{r[2][0]}</Cell>
              ) : (
                <>
                  <Cell $track={r[2][1]}>{r[2][0]}</Cell>
                  <Cell />
                </>
              )}
              <Cell />
              <Cell />
            </React.Fragment>
          ))}
        </Sheet>
        <Selection />
      </SheetArea>

      <TabsBar>
        <NavArrow $gap={30}><Tri dir="left" c="#b5b5b5" /></NavArrow>
        <NavArrow $gap={29}><Tri dir="right" c="#b5b5b5" /></NavArrow>
        <SheetTab>Sheet1</SheetTab>
        <AddSheet>
          <Ico width={20} height={20} viewBox="0 0 20 20" strokeWidth={3.2} style={{ color: '#555' }}>
            <path d="M10 1v18M1 10h18" />
          </Ico>
        </AddSheet>
      </TabsBar>
      <StatusBar>
        <Ready>Ready</Ready>
        <Access><AccessIcon />Accessibility: Good to go</Access>
        <StatusRight>
          <Count>Count: 3</Count>
          <ViewBtn $on $w={68}><GridViewIcon /></ViewBtn>
          <ViewBtn $w={63}><PageViewIcon /></ViewBtn>
          <ViewBtn $w={64}><BreakViewIcon /></ViewBtn>
          <ZoomSign $ml={10}>−</ZoomSign>
          <ZoomTrack />
          <ZoomSign>+</ZoomSign>
          <ZoomPct>400%</ZoomPct>
        </StatusRight>
      </StatusBar>

      <Callout $x={658} $y={53} $w={107} $h={79} />
      <Callout $x={1551} $y={90} $w={103} $h={166} />
      <ArrowOverlay width={800} height={120} viewBox="760 70 800 120">
        <polygon
          fill="#3e47c9"
          points="765,79 1520,160 1519,148 1549,165 1517,177 1520,172 765,82"
        />
      </ArrowOverlay>
    </Win>
  );
}
